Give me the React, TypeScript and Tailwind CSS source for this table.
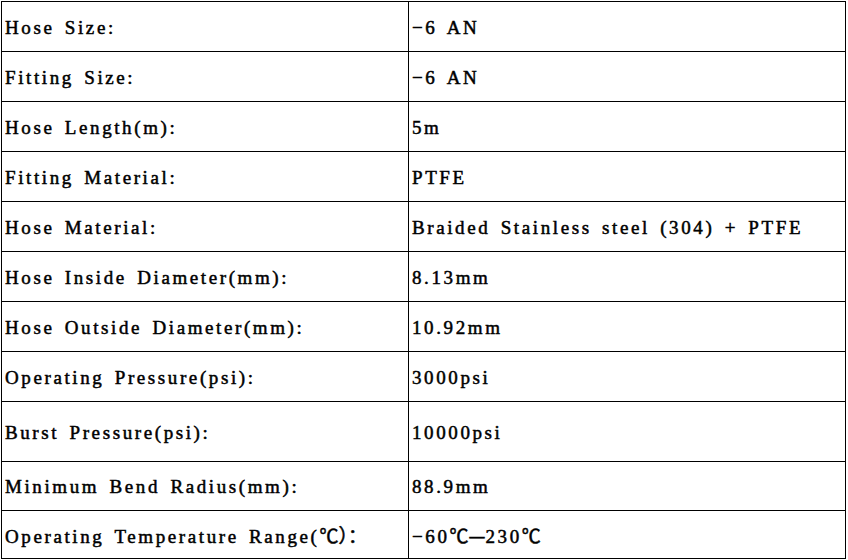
import React from "react";

const cjk = "font-['Noto_Sans_CJK_SC',sans-serif] tracking-normal";

type Row = { label: React.ReactNode; value: React.ReactNode; h: string };

const rows: Row[] = [
  { label: "Hose Size:", value: "−6 AN", h: "h-[50px]" },
  { label: "Fitting Size:", value: "−6 AN", h: "h-[50px]" },
  { label: "Hose Length(m):", value: "5m", h: "h-[50px]" },
  { label: "Fitting Material:", value: "PTFE", h: "h-[50px]" },
  { label: "Hose Material:", value: "Braided Stainless steel (304) + PTFE", h: "h-[50px]" },
  { label: "Hose Inside Diameter(mm):", value: "8.13mm", h: "h-[50px]" },
  { label: "Hose Outside Diameter(mm):", value: "10.92mm", h: "h-[50px]" },
  { label: "Operating Pressure(psi):", value: "3000psi", h: "h-[50px]" },
  { label: "Burst Pressure(psi):", value: "10000psi", h: "h-[60px]" },
  { label: "Minimum Bend Radius(mm):", value: "88.9mm", h: "h-[49px]" },
  {
    label: (
      <>
        Operating Temperature Range(<span className={cjk}>℃）：</span>
      </>
    ),
    value: (
      <>
        −60<span className={cjk}>℃—</span>230<span className={cjk}>℃</span>
      </>
    ),
    h: "h-[48px]",
  },
];

export default function App() {
  return (
    <div className="w-[848px] h-[560px] bg-white pl-[1px] pt-[1px] font-['Liberation_Serif',serif] text-[19px] tracking-[2.6px] [word-spacing:3px] text-black [-webkit-text-stroke:0.5px_black]">
      <table className="w-[845px] table-fixed border-collapse border border-black">
        <colgroup>
          <col className="w-[407px]" />
          <col />
        </colgroup>
        <tbody>
          {rows.map((r, i) => (
            <tr key={i} className={r.h}>
              <td className="border border-black px-[3px] pt-[3px] align-middle whitespace-nowrap">{r.label}</td>
              <td className="border border-black px-[3px] pt-[3px] align-middle whitespace-nowrap">{r.value}</td>
            </tr>
          ))}
        </tbody>
      </table>
    </div>
  );
}
